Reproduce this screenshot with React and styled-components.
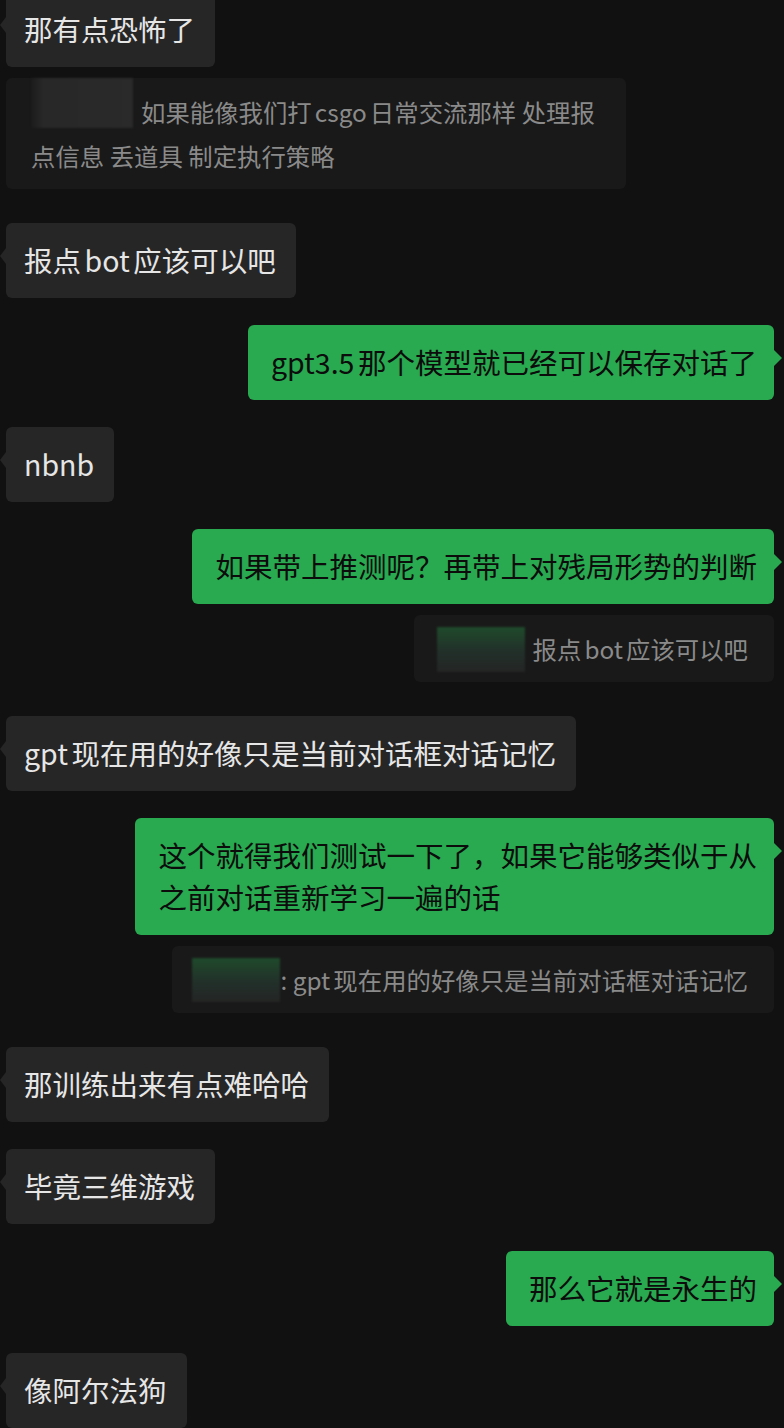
import React from "react";
import styled, { createGlobalStyle, css } from "styled-components";

const GlobalStyle = createGlobalStyle`
  html, body {
    margin: 0;
    padding: 0;
    background: #111111;
    overflow: hidden;
  }
  body {
    font-family: "PingFang SC", "Noto Sans CJK SC", "Noto Sans", sans-serif;
    text-autospace: normal;
  }
`;

const Chat = styled.div`
  display: flex;
  flex-direction: column;
  gap: 27px;
  margin-top: -8px;
`;

const Row = styled.div`
  display: flex;
  flex-direction: column;
  align-items: ${(p) => (p.$mine ? "flex-end" : "flex-start")};
  padding: ${(p) => (p.$mine ? "0 10px 0 0" : "0 0 0 6px")};
  margin-bottom: ${(p) => (p.$quoted ? "7px" : "0")};
`;

const Bubble = styled.div`
  position: relative;
  border-radius: 6px;
  font-size: 28.5px;
  line-height: 42px;
  padding: 16px 20px 17px 18px;
  white-space: nowrap;
  background: #262626;
  color: #e6e6e6;

  &::before {
    content: "";
    position: absolute;
    top: 25px;
    left: -6px;
    width: 0;
    height: 0;
    border-top: 8px solid transparent;
    border-bottom: 8px solid transparent;
    border-right: 6px solid #262626;
  }

  ${(p) =>
    p.$mine &&
    css`
      background: #29a950;
      color: #0c0c0c;
      padding: 16px 17px 17px 23px;

      &::before {
        left: auto;
        right: -8px;
        border-right: 0;
        border-left: 8px solid #29a950;
      }
    `}
`;

const Quote = styled.div`
  margin-top: 11px;
  box-sizing: border-box;
  width: ${(p) => (p.$width ? `${p.$width}px` : "auto")};
  padding: 12px 26px 11px ${(p) => p.$padLeft || 23}px;
  border-radius: 6px;
  background: #191919;
  color: #8a8a8a;
  font-size: 24.4px;
  line-height: 44px;
  white-space: nowrap;
`;

const Blurred = styled.span`
  display: inline-block;
  vertical-align: top;
  width: ${(p) => p.$w}px;
  height: ${(p) => p.$h}px;
  margin-top: ${(p) => p.$offset || 0}px;
  margin-bottom: -${(p) => p.$h}px;
  margin-right: ${(p) => (p.$gap === undefined ? 8 : p.$gap)}px;
  filter: blur(1px);
  background: ${(p) =>
    p.$tone === "green"
      ? "linear-gradient(180deg, #1f4a2b 0%, #22302a 55%, #242524 100%)"
      : "linear-gradient(90deg, #1c1c1c 0%, #282828 12%, #2a2a2a 100%)"};
`;

const messages = [
  { text: "那有点恐怖了" },
  {
    text: "报点bot应该可以吧",
    quote: (
      <Quote $width={620} $padLeft={25}>
        <Blurred $w={102} $h={50} $offset={-12} />
        如果能像我们打csgo日常交流那样 处理报
        <br />
        点信息 丢道具 制定执行策略
      </Quote>
    ),
    quoteFirst: true,
  },
  { text: "gpt3.5那个模型就已经可以保存对话了", mine: true },
  { text: "nbnb" },
  {
    text: "如果带上推测呢？再带上对残局形势的判断",
    mine: true,
    quote: (
      <Quote>
        <Blurred $w={88} $h={45} $tone="green" />
        报点bot应该可以吧
      </Quote>
    ),
  },
  { text: "gpt现在用的好像只是当前对话框对话记忆" },
  {
    text: (
      <>
        这个就得我们测试一下了，如果它能够类似于从
        <br />
        之前对话重新学习一遍的话
      </>
    ),
    mine: true,
    quote: (
      <Quote $padLeft={20}>
        <Blurred $w={88} $h={44} $tone="green" $gap={0} />
        : gpt现在用的好像只是当前对话框对话记忆
      </Quote>
    ),
  },
  { text: "那训练出来有点难哈哈" },
  { text: "毕竟三维游戏" },
  { text: "那么它就是永生的", mine: true },
  { text: "像阿尔法狗" },
];

export default function App() {
  // the first quote belongs under the first bubble, the rest follow their own message
  return (
    <>
      <GlobalStyle />
      <Chat>
        <Row $quoted>
          <Bubble>{messages[0].text}</Bubble>
          {messages[1].quote}
        </Row>
        {messages.slice(1).map((m, i) => (
          <Row key={i} $mine={m.mine} $quoted={!!m.quote && !m.quoteFirst}>
            <Bubble $mine={m.mine}>{m.text}</Bubble>
            {!m.quoteFirst && m.quote}
          </Row>
        ))}
      </Chat>
    </>
  );
}
